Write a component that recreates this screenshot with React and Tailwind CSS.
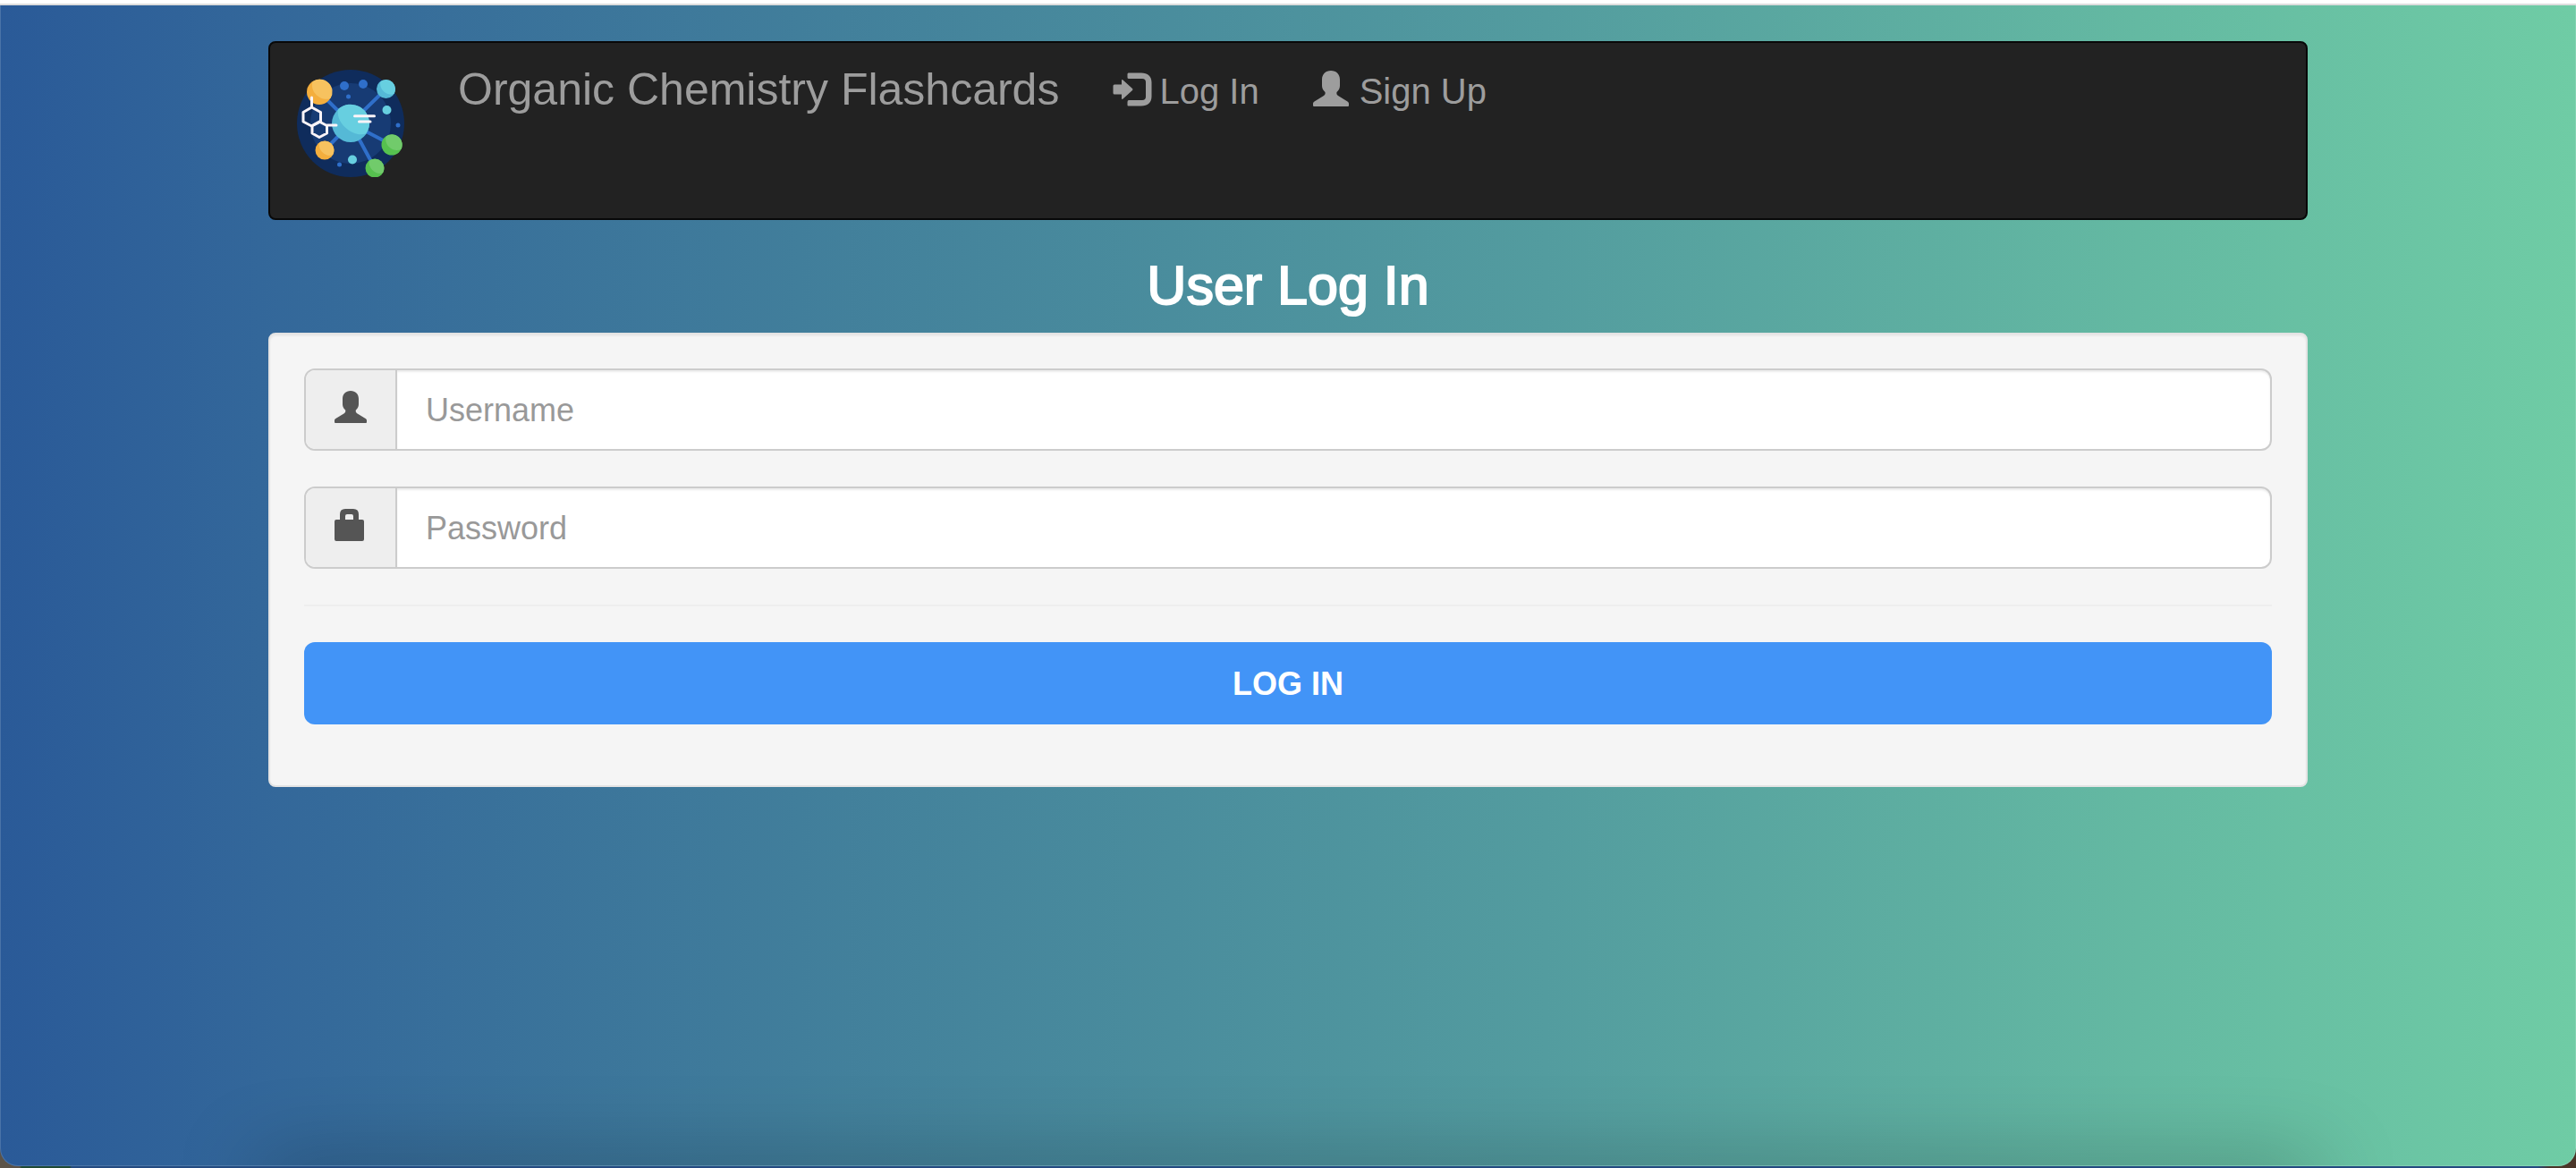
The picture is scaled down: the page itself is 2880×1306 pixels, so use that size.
function UserIcon({ className }) {
  return (
    <svg viewBox="0 0 40 40" className={className} fill="currentColor" aria-hidden="true">
      <path d="M20 0C26 0 30 4 30 10V17C30 20 28.500 22 26.500 24C26 26 26.800 27.300 28 28L38.500 34.500C39.600 35.300 40 36 40 37V39Q40 40 39 40H1Q0 40 0 39V37C0 36 .4 35.300 1.500 34.500L12 28C13.200 27.300 14 26 13.500 24C11.500 22 10 20 10 17V10C10 4 14 0 20 0Z" />
    </svg>
  );
}

function LogInIcon({ className }) {
  return (
    <svg viewBox="0 0 44 38" className={className} fill="currentColor" aria-hidden="true">
      <path d="M17.500 .5H32C39 .5 43.500 4.500 43.500 11V27C43.500 33.500 39 37.500 32 37.500H17.500Q16.500 37.500 16.500 36.500V33Q16.500 31 18 31H33Q37 31 37 27V11Q37 7 33 7H18Q16.500 7 16.500 5.500V2Q16.500 .5 17.500 .5Z" />
      <path d="M2 13.500H10V9Q10 7.500 11.500 8.500L22 18Q23 19 22 20L11.500 29.500Q10 30.500 10 29V24.500H2Q.5 24.500 .5 23V15Q.5 13.500 2 13.500Z" />
    </svg>
  );
}

function LockIcon({ className }) {
  return (
    <svg viewBox="0 0 36 36" className={className} fill="currentColor" aria-hidden="true">
      <path fillRule="evenodd" d="M6 12V6Q6 0 12 0H21Q27 0 27 6V12H31Q33 12 33 14V34Q33 36 31 36H2Q0 36 0 34V14Q0 12 2 12ZM12 12H21V8Q21 6 19 6H14Q12 6 12 8Z" />
    </svg>
  );
}

function Logo() {
  return (
    <svg viewBox="0 0 120 120" className="size-[120px] shrink-0" role="img" aria-label="Organic Chemistry Flashcards logo">
      <circle cx="60" cy="60" r="60" fill="#0f2c5c" />
      <circle cx="60" cy="60" r="45" fill="#173b74" />
      <g stroke="#2f6fca" strokeWidth="4">
        <path d="M25 25L60 60L99 22M60 60L106 84M60 60L87 110M60 60L31 90" fill="none" />
      </g>
      <g fill="#2f6fca">
        <circle cx="53" cy="18" r="5" />
        <circle cx="74" cy="16" r="5" />
        <circle cx="57.500" cy="30" r="2.500" />
        <circle cx="113" cy="62" r="2.500" />
        <circle cx="47.500" cy="106" r="2.500" />
      </g>
      <circle cx="60" cy="60" r="21" fill="#55b9d6" />
      <path d="M46 44A21 21 0 0 1 80.500 64A21 21 0 0 1 77 71.500C64 76 43 61 46 44Z" fill="#67cfe0" />
      <circle cx="25" cy="25" r="14" fill="#f4ae3d" />
      <path d="M17.500 13.200A14 14 0 0 1 37.500 32C27 36 14 25 17.500 13.200Z" fill="#f7c25f" />
      <circle cx="99.500" cy="21.500" r="10.500" fill="#55b9d6" />
      <path d="M93.500 13A10.500 10.500 0 0 1 108.500 27C101 30 91 22 93.500 13Z" fill="#67cfe0" />
      <circle cx="100.500" cy="45" r="5" fill="#67cfe0" />
      <circle cx="62" cy="100.500" r="5" fill="#67cfe0" />
      <circle cx="31" cy="90" r="10.500" fill="#f4ae3d" />
      <path d="M25 81.500A10.500 10.500 0 0 1 40 95.500C32 98 23 90 25 81.500Z" fill="#f7c25f" />
      <circle cx="106" cy="84" r="11.500" fill="#56c14f" />
      <path d="M99.500 74.500A11.500 11.500 0 0 1 116.500 89C107 93 97 84 99.500 74.500Z" fill="#71cb6b" />
      <circle cx="87" cy="110" r="10.500" fill="#56c14f" />
      <path d="M81 101.500A10.500 10.500 0 0 1 96 115.500C88 118 79 110 81 101.500Z" fill="#71cb6b" />
      <g fill="none" stroke="#fbf4f8" strokeWidth="3" strokeLinecap="round" strokeLinejoin="round">
        <path d="M16.500 31V42L26.500 47.500V58L16.500 63L7 58V47.500L16.500 42" />
        <path d="M25 58L33.500 62.500V71L25 75.500L17 71V62.500ZM34 62H44M64.500 51.800H86.500M69.500 58H82" />
      </g>
    </svg>
  );
}

function Field({ id, type, label, icon }) {
  return (
    <div className="flex h-[92px] rounded-xl border-2 border-[#ccc] bg-white">
      <label htmlFor={id} className="flex w-[100px] shrink-0 items-center rounded-l-[10px] bg-[#eee] pb-1.5 pl-8 text-[#555]">
        {icon}
      </label>
      <input
        id={id}
        type={type}
        aria-label={label}
        placeholder={label}
        className="min-w-0 flex-1 rounded-r-[10px] border-l-2 border-[#ccc] px-8 pt-0.5 text-4xl text-[#555] shadow-[inset_0_2px_2px_rgba(0,0,0,0.075)] outline-none placeholder:text-[#999]"
      />
    </div>
  );
}

export default function App() {
  return (
    <div className="flex min-h-screen flex-col bg-[linear-gradient(90deg,#5c5348_0px,#5c5348_22px,#1f4a35_24px,#1f4a35_78px,#234a80_80px,#234a80_98.500%,#4a3528_99%)] font-['Liberation_Sans',Arial,sans-serif]">
      <div className="h-[6px] border-b-2 border-[#ddd] bg-white" />
      <div className="relative mb-[2px] flex-1 overflow-hidden rounded-b-[20px] border-x border-b border-white/15 bg-[linear-gradient(90deg,#2a5a98_0%,#33679a_10%,#417e9b_31%,#539c9f_60%,#64b9a2_83%,#6fcca5_100%)] bg-origin-border">
        <div className="pointer-events-none absolute inset-x-[10%] top-full h-10 shadow-[0_0_90px_rgba(0,0,0,0.35)]" />
        <div className="mx-auto w-full max-w-[2280px] pt-10">
          <nav className="flex h-[200px] items-start rounded-lg border-2 border-[#080808] bg-[#222] pt-7 pl-[30px] text-[#9d9d9d]">
            <a href="#home" className="pt-0.5"><Logo /></a>
            <a href="#home" className="-mt-1.5 ml-[60px] text-[50px] leading-[60px]">Organic Chemistry Flashcards</a>
            <a href="#login" className="ml-[60px] flex items-center text-[40px] leading-[52px]">
              <LogInIcon className="mr-2 mb-1 h-[38px] w-11" />
              Log In
            </a>
            <a href="#signup" className="ml-[60px] flex items-center text-[40px] leading-[52px]">
              <UserIcon className="mr-3 mb-1.5 size-10" />
              Sign Up
            </a>
          </nav>
          <main>
            <h1 className="mt-10 mb-5 text-center text-[61px] leading-[66px] text-white [-webkit-text-stroke:2px_white]">User Log In</h1>
            <form className="rounded-lg border-2 border-[#e3e3e3] bg-[#f5f5f5] px-[38px] pt-[38px] pb-[68px] shadow-[inset_0_2px_2px_rgba(0,0,0,0.05)]">
              <div className="flex flex-col gap-10">
                <Field id="username" type="text" label="Username" icon={<UserIcon className="size-9" />} />
                <Field id="password" type="password" label="Password" icon={<LockIcon className="size-9" />} />
              </div>
              <hr className="my-10 border-t-2 border-[#eee]" />
              <button type="button" className="h-[92px] w-full rounded-xl bg-[#4294f7] pt-0.5 text-4xl font-bold text-white">LOG IN</button>
            </form>
          </main>
        </div>
      </div>
    </div>
  );
}
